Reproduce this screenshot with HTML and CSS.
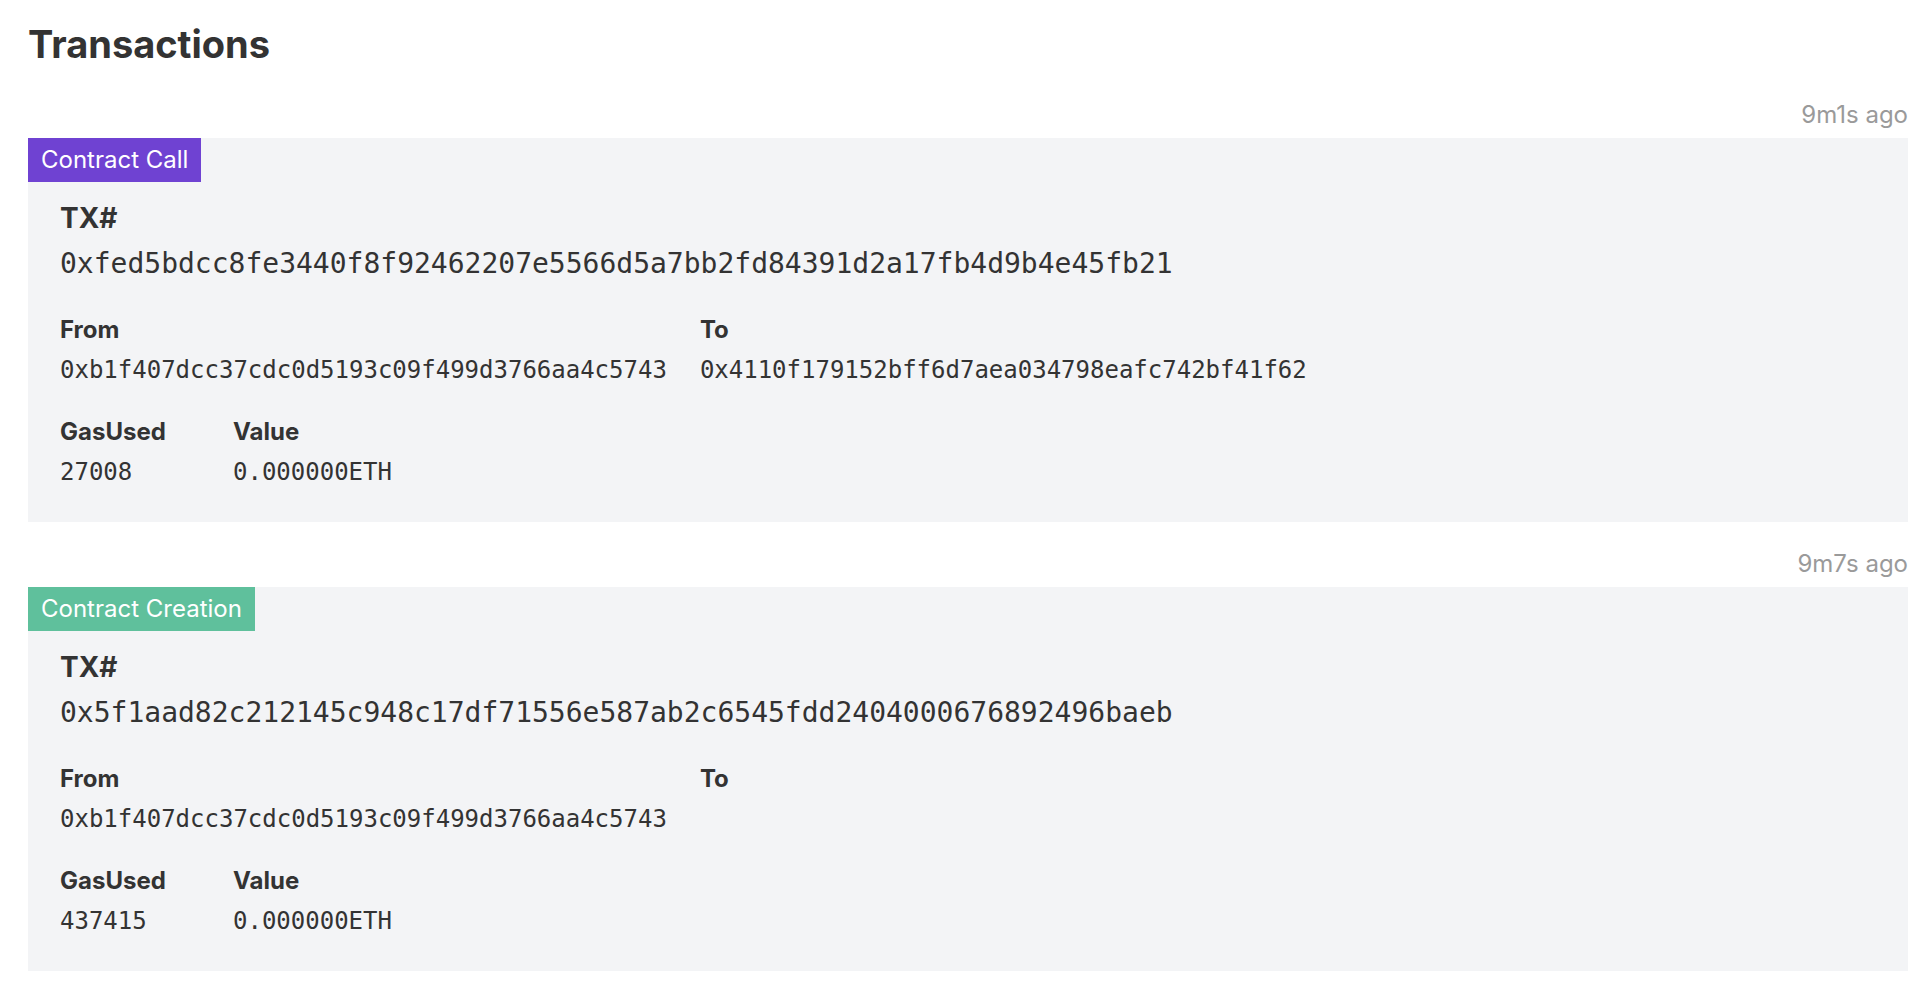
FILE: index.html
```html
<!DOCTYPE html>
<html lang="en">
<head>
<meta charset="utf-8">
<title>Transactions</title>
<link rel="stylesheet" href="styles.css">
</head>
<body>
<main class="page">
  <h1 class="title">Transactions</h1>

  <section class="tx">
    <div class="tx-time">9m1s ago</div>
    <div class="card">
      <span class="badge badge-call">Contract Call</span>
      <div class="card-body">
        <div class="label label-tx">TX#</div>
        <div class="hash">0xfed5bdcc8fe3440f8f92462207e5566d5a7bb2fd84391d2a17fb4d9b4e45fb21</div>
        <div class="row row-first">
          <div class="field field-from">
            <div class="label">From</div>
            <div class="value">0xb1f407dcc37cdc0d5193c09f499d3766aa4c5743</div>
          </div>
          <div class="field">
            <div class="label">To</div>
            <div class="value">0x4110f179152bff6d7aea034798eafc742bf41f62</div>
          </div>
        </div>
        <div class="row">
          <div class="field field-gas">
            <div class="label">GasUsed</div>
            <div class="value">27008</div>
          </div>
          <div class="field">
            <div class="label">Value</div>
            <div class="value">0.000000ETH</div>
          </div>
        </div>
      </div>
    </div>
  </section>

  <section class="tx">
    <div class="tx-time">9m7s ago</div>
    <div class="card">
      <span class="badge badge-create">Contract Creation</span>
      <div class="card-body">
        <div class="label label-tx">TX#</div>
        <div class="hash">0x5f1aad82c212145c948c17df71556e587ab2c6545fdd2404000676892496baeb</div>
        <div class="row row-first">
          <div class="field field-from">
            <div class="label">From</div>
            <div class="value">0xb1f407dcc37cdc0d5193c09f499d3766aa4c5743</div>
          </div>
          <div class="field">
            <div class="label">To</div>
            <div class="value"></div>
          </div>
        </div>
        <div class="row">
          <div class="field field-gas">
            <div class="label">GasUsed</div>
            <div class="value">437415</div>
          </div>
          <div class="field">
            <div class="label">Value</div>
            <div class="value">0.000000ETH</div>
          </div>
        </div>
      </div>
    </div>
  </section>
</main>
</body>
</html>
```

FILE: styles.css
```css
* {
  box-sizing: border-box;
}

html, body {
  margin: 0;
  padding: 0;
  background: #ffffff;
}

body {
  font-family: Inter, "Noto Sans", "Liberation Sans", sans-serif;
  color: #333333;
}

.page {
  width: 1880px;
  margin-left: 28px;
  padding-top: 20px;
}

.title {
  margin: 0;
  font-size: 38px;
  line-height: 48px;
  font-weight: 700;
  color: #333333;
}

.tx {
  margin-top: 28px;
}

.tx:first-of-type {
  margin-top: 33px;
}

.tx-time {
  text-align: right;
  font-size: 24px;
  line-height: 28px;
  color: #9a9a9a;
  margin-bottom: 9px;
}

.card {
  background: #f3f4f6;
}

.badge {
  display: inline-block;
  height: 44px;
  line-height: 44px;
  padding: 0 13px;
  font-size: 24px;
  color: #ffffff;
  vertical-align: top;
}

.badge-call {
  background: #6f42d2;
}

.badge-create {
  background: #5fc09c;
}

.card-body {
  padding: 16px 32px 28px;
}

.label {
  font-size: 24px;
  line-height: 36px;
  font-weight: 700;
  color: #333333;
}

.label-tx {
  font-size: 28px;
  line-height: 41px;
}

.hash {
  font-family: "DejaVu Sans Mono", "Liberation Mono", monospace;
  font-size: 28px;
  line-height: 49px;
  color: #333333;
}

.row {
  display: flex;
  margin-top: 22px;
}

.row-first {
  margin-top: 24px;
}

.field-from {
  margin-right: 33px;
}

.field-gas {
  width: 173px;
}

.value {
  font-family: "DejaVu Sans Mono", "Liberation Mono", monospace;
  font-size: 24px;
  line-height: 44px;
  height: 44px;
  color: #333333;
  white-space: nowrap;
}
```
